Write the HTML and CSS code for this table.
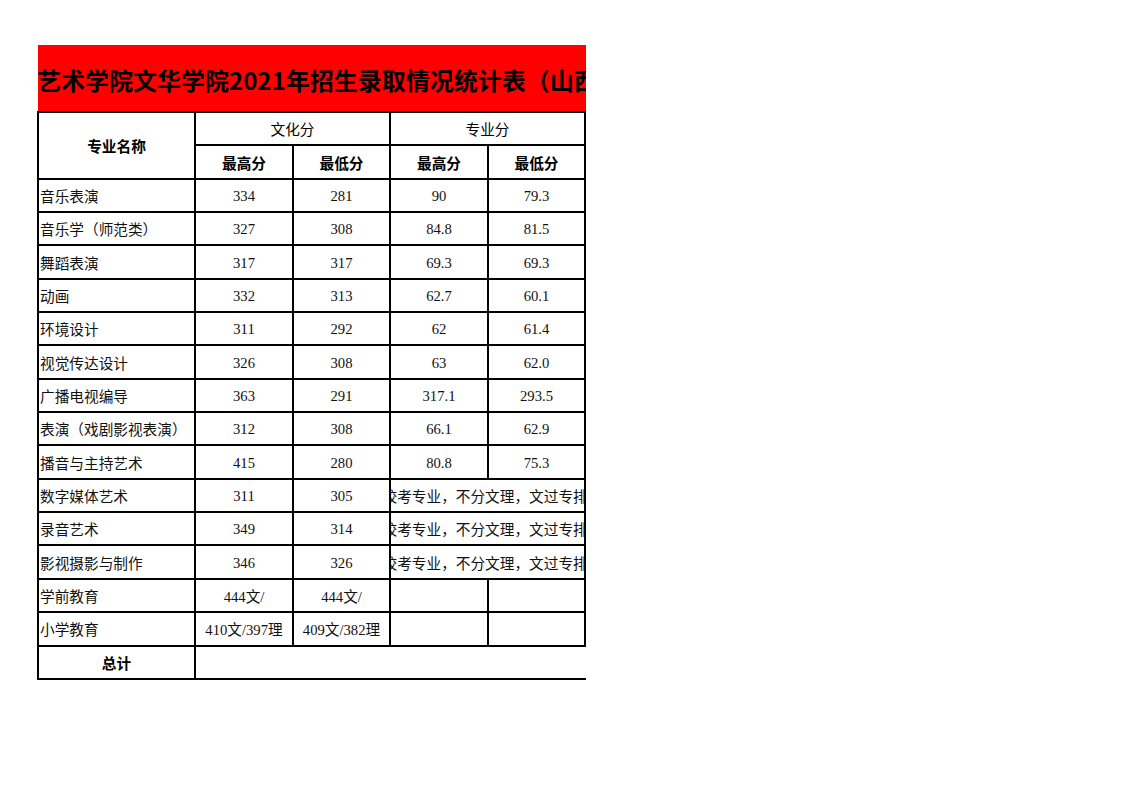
FILE: index.html
```html
<!DOCTYPE html>
<html lang="zh-CN">
<head>
<meta charset="utf-8">
<title>招生录取情况统计表</title>
<link rel="stylesheet" href="styles.css">
</head>
<body>
<div class="sheet">
  <div class="title"><span class="title-text">艺术学院文华学院2021年招生录取情况统计表（山西省）</span></div>
  <div class="grid">
    <div class="cell head bold span-r2">专业名称</div>
    <div class="cell head span-c2">文化分</div>
    <div class="cell head span-c2">专业分</div>
    <div class="cell head bold">最高分</div>
    <div class="cell head bold">最低分</div>
    <div class="cell head bold">最高分</div>
    <div class="cell head bold">最低分</div>

    <div class="cell name">音乐表演</div><div class="cell">334</div><div class="cell">281</div><div class="cell">90</div><div class="cell">79.3</div>
    <div class="cell name">音乐学（师范类）</div><div class="cell">327</div><div class="cell">308</div><div class="cell">84.8</div><div class="cell">81.5</div>
    <div class="cell name">舞蹈表演</div><div class="cell">317</div><div class="cell">317</div><div class="cell">69.3</div><div class="cell">69.3</div>
    <div class="cell name">动画</div><div class="cell">332</div><div class="cell">313</div><div class="cell">62.7</div><div class="cell">60.1</div>
    <div class="cell name">环境设计</div><div class="cell">311</div><div class="cell">292</div><div class="cell">62</div><div class="cell">61.4</div>
    <div class="cell name">视觉传达设计</div><div class="cell">326</div><div class="cell">308</div><div class="cell">63</div><div class="cell">62.0</div>
    <div class="cell name">广播电视编导</div><div class="cell">363</div><div class="cell">291</div><div class="cell">317.1</div><div class="cell">293.5</div>
    <div class="cell name">表演（戏剧影视表演）</div><div class="cell">312</div><div class="cell">308</div><div class="cell">66.1</div><div class="cell">62.9</div>
    <div class="cell name">播音与主持艺术</div><div class="cell">415</div><div class="cell">280</div><div class="cell">80.8</div><div class="cell">75.3</div>
    <div class="cell name">数字媒体艺术</div><div class="cell">311</div><div class="cell">305</div><div class="cell note span-c2"><span class="note-text">校考专业，不分文理，文过专排</span></div>
    <div class="cell name">录音艺术</div><div class="cell">349</div><div class="cell">314</div><div class="cell note span-c2"><span class="note-text">校考专业，不分文理，文过专排</span></div>
    <div class="cell name">影视摄影与制作</div><div class="cell">346</div><div class="cell">326</div><div class="cell note span-c2"><span class="note-text">校考专业，不分文理，文过专排</span></div>
    <div class="cell name">学前教育</div><div class="cell mix">444文/</div><div class="cell mix">444文/</div><div class="cell"></div><div class="cell"></div>
    <div class="cell name">小学教育</div><div class="cell mix">410文/397理</div><div class="cell mix">409文/382理</div><div class="cell"></div><div class="cell"></div>
    <div class="cell head bold">总计</div><div class="cell span-c4 open"></div>
  </div>
</div>
</body>
</html>
```
FILE: styles.css
```css
html, body {
  margin: 0;
  padding: 0;
  background: #ffffff;
}

.sheet {
  margin: 45px 0 0 37px;
  width: 549px;
  overflow: hidden;
}

.title {
  margin-left: 1px;
  height: 66px;
  background: #ff0000;
  display: flex;
  align-items: center;
  white-space: nowrap;
  overflow: hidden;
  font-family: "Noto Sans CJK SC", sans-serif;
  font-weight: bold;
  font-size: 24px;
  color: #000;
}

.title-text {
  margin-left: -1px;
  padding-top: 2px;
}

.grid {
  display: grid;
  grid-template-columns: 157px 98px 97px 98px 97px;
  grid-auto-rows: 33.35px;
  border-left: 2px solid #000;
  border-top: 2px solid #000;
}

.cell {
  box-sizing: border-box;
  border-right: 2px solid #000;
  border-bottom: 2px solid #000;
  display: flex;
  align-items: center;
  justify-content: center;
  padding-top: 2px;
  font-family: "Liberation Serif", "Noto Sans CJK SC", serif;
  font-size: 14.67px;
  color: #111;
  white-space: nowrap;
  overflow: hidden;
}

.head {
  padding-top: 0;
  font-family: "Noto Sans CJK SC", sans-serif;
  font-size: 14.67px;
  color: #000;
}

.bold {
  font-weight: bold;
}

.name {
  justify-content: flex-start;
  padding-top: 0;
  padding-left: 1px;
}

.mix {
  padding-top: 0;
}

.span-r2 {
  grid-row: span 2;
}

.span-c2 {
  grid-column: span 2;
}

.span-c4 {
  grid-column: span 4;
}

.open {
  border-right: none;
}

.note {
  justify-content: flex-start;
  padding-top: 0;
}

.note-text {
  margin-left: -8.5px;
}
```
